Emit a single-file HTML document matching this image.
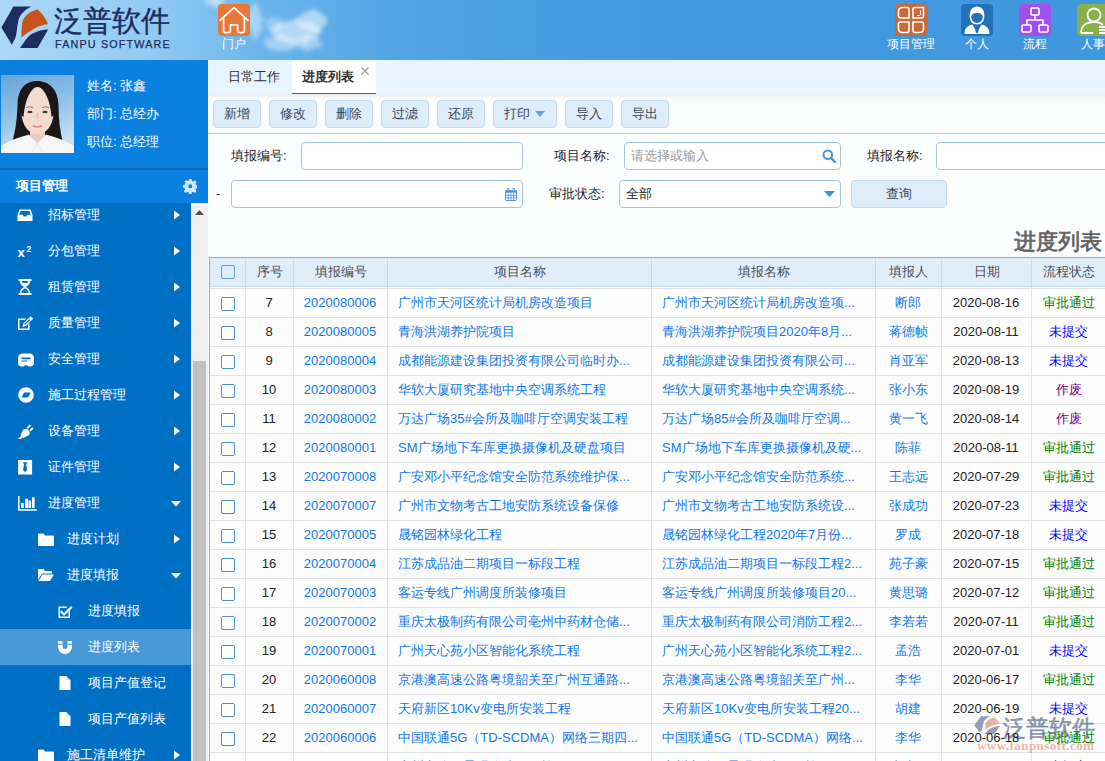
<!DOCTYPE html>
<html><head><meta charset="utf-8">
<style>
*{margin:0;padding:0;box-sizing:border-box}
html,body{width:1105px;height:761px;overflow:hidden;font-family:"Liberation Sans",sans-serif;font-size:13px;color:#333;background:#fff}
svg{position:absolute;display:block}
#hdr{position:absolute;left:0;top:0;width:1105px;height:60px;background:linear-gradient(90deg,#acd7f8 0px,#92caf3 150px,#6cb5ec 260px,#57a9e6 360px,#4aa0e2 480px,#4299df 700px,#3f97de 1105px);overflow:hidden}
.cloud{position:absolute;border-radius:50%;background:rgba(255,255,255,.55);filter:blur(4px)}
.hic{position:absolute;top:4px;width:32px;height:32px;border-radius:4px}
.hl1{position:absolute;top:37px;color:#fff;font-size:12px;line-height:14px;white-space:nowrap;text-align:center}
#side{position:absolute;left:0;top:60px;width:208px;height:701px;background:#0070c4;overflow:hidden}
#user{position:absolute;left:0;top:0;width:208px;height:108px;background:#0a80e0}
.ut{position:absolute;left:87px;color:#fff;font-size:13px;line-height:14px;white-space:nowrap}
#sep{position:absolute;left:0;top:108px;width:208px;height:2px;background:#0266b8}
#pm{position:absolute;left:0;top:110px;width:208px;height:33px;background:#0a80e0;color:#fff;font-weight:bold}
#menu{position:absolute;left:0;top:143px;width:191px;height:558px;overflow:hidden}
.mi{position:absolute;left:0;width:191px;height:36px}
.mi.hl{background:#4998d6}
.mt{position:absolute;top:10px;color:#fff;font-size:13px;line-height:16px;white-space:nowrap}
#sb{position:absolute;left:191px;top:143px;width:17px;height:558px;background:#f0f0f0}
#main{position:absolute;left:208px;top:60px;width:897px;height:701px;background:#fcfdfe;overflow:hidden}
#tabs{position:absolute;left:0;top:0;width:897px;height:34px;background:#e8f5fe}
.tab{position:absolute;top:0;height:34px;line-height:34px;font-size:13px;color:#333;white-space:nowrap}
#tb{position:absolute;left:0;top:34px;width:897px;height:40px;background:linear-gradient(#ebeced,#f7f8f9 4px,#fbfdfd 9px,#fbfdfd);border-bottom:1px solid #a9cbe4}
.btn{position:absolute;top:6px;height:28px;width:48px;background:#deedfa;border:1px solid #c3d9ec;border-radius:4px;text-align:center;line-height:26px;color:#3a4656;font-size:13px;white-space:nowrap}
.lbl{position:absolute;font-size:13px;color:#1e1e1e;line-height:16px;white-space:nowrap}
.inp{position:absolute;height:28px;background:#fff;border:1px solid #a6c6e0;border-radius:4px}
#title{position:absolute;left:806px;top:169px;font-size:22px;font-weight:bold;color:#666;line-height:26px;white-space:nowrap}
#thead{position:absolute;left:1px;top:197px;width:920px;height:30px;background:#e0eefa;border-top:1px solid #7fb5e3;border-bottom:1px solid #c2dcf0}
.th{position:absolute;top:0;height:28px;line-height:28px;text-align:center;color:#4a4e5a;font-size:13px;border-left:1px solid #c5dcf0}
#tbody{position:absolute;left:1px;top:227px;width:920px;height:480px;overflow:hidden;background:#fff}
#tleft{position:absolute;left:1px;top:197px;width:1px;height:520px;background:#7fb5e3}
.tr{position:absolute;left:0;width:920px;height:29px;border-top:1px solid #e3e3e6}
.tr span{position:absolute;z-index:3;top:0;height:28px;line-height:28px;white-space:nowrap;font-size:13px;color:#222}
.tr span.c{text-align:center}
.tr span.bl{color:#0f79ec}
.cb{position:absolute;width:14px;height:14px;border:1px solid #4a8fd2;border-radius:2px;background:#fff}
.vl{position:absolute;top:0;width:1px;height:480px;background:#e3e3e6}
</style></head><body>
<div id="hdr">
  <!-- clouds -->
  <svg style="left:195px;top:0" width="150" height="60" viewBox="0 0 150 60">
    <defs>
      <filter id="cf" x="-20%" y="-20%" width="140%" height="140%">
        <feTurbulence type="fractalNoise" baseFrequency="0.12" numOctaves="2" seed="3" result="n"/>
        <feDisplacementMap in="SourceGraphic" in2="n" scale="9" result="d"/>
        <feGaussianBlur in="d" stdDeviation="2.2"/>
      </filter>
    </defs>
    <g filter="url(#cf)" fill="#fff">
      <ellipse cx="20" cy="1" rx="10" ry="5" opacity=".5"/>
      <ellipse cx="60" cy="21" rx="7" ry="18" opacity=".4"/>
      <ellipse cx="117" cy="21" rx="15" ry="10" opacity=".5"/>
      <ellipse cx="101" cy="32" rx="26" ry="11" opacity=".5"/>
      <ellipse cx="86" cy="44" rx="15" ry="8" opacity=".4"/>
      <ellipse cx="113" cy="43" rx="13" ry="7" opacity=".4"/>
      <ellipse cx="80" cy="24" rx="9" ry="7" opacity=".3"/>
    </g>
  </svg>
  <!-- logo -->
  <svg style="left:0;top:0" width="52" height="52" viewBox="0 0 52 52">
    <path d="M13.4 6.5H31.5C26 9 20 14 18.4 20.2 17 26 17 32 15.5 37.6L11.9 44.8 1.4 27.5z" fill="#1c2d5e"/>
    <path d="M37.6 9.4C42 13 46 18 48.1 24.2 40 24.5 30 30 21.3 37.6 21.5 30 22 24 22.4 21.7 24 16 30 11 37.6 9.4z" fill="#c9521c"/>
    <path d="M48.1 29.6L37.6 48.1H19.9C24 42 27 38 28.9 36.2 34 32 42 29.6 48.1 29.6z" fill="#1c2d5e"/>
  </svg>
  <div style="position:absolute;left:54px;top:3px;font-size:28.5px;line-height:36px;color:#1c2d5e;-webkit-text-stroke:0.35px #1c2d5e;white-space:nowrap">泛普软件</div>
  <div style="position:absolute;left:55px;top:38px;font-size:10.8px;line-height:12px;color:#1c2d5e;letter-spacing:1.15px;-webkit-text-stroke:.25px #1c2d5e;white-space:nowrap">FANPU SOFTWARE</div>
  <!-- home -->
  <div class="hic" style="left:218px;background:#e8773a"></div>
  <svg style="left:218px;top:4px" width="32" height="32" viewBox="0 0 32 32"><path d="M2 16.3L16 3.6l14 12.7" fill="none" stroke="#fff" stroke-width="1.7" stroke-linecap="round" stroke-linejoin="round"/><path d="M5.6 13.5v13.5c0 1 .6 1.6 1.6 1.6h3.6c1 0 1.6-.6 1.6-1.6v-6.2h7.2v6.2c0 1 .6 1.6 1.6 1.6h3.6c1 0 1.6-.6 1.6-1.6V13.5" fill="none" stroke="#fff" stroke-width="1.7" stroke-linejoin="round"/></svg>
  <div class="hl1" style="left:222px;width:24px">门户</div>
  <!-- right icons -->
  <div class="hic" style="left:895px;background:#c8693a"></div>
  <svg style="left:895px;top:4px" width="32" height="32" viewBox="0 0 32 32" fill="none" stroke="#fff" stroke-width="1.6">
    <path d="M7.5 3.5h4.5c1.2 0 2 .8 2 2V14H6c-1.5 0-2.5-1-2.5-2.5V7.5c0-2.5 1.5-4 4-4z"/>
    <path d="M18 5.5c0-1.2.8-2 2-2h8.5V12c0 1.2-.8 2-2 2H18z"/>
    <path d="M3.5 20c0-1.2.8-2 2-2H14v8.5c0 1.2-.8 2-2 2H7.5c-2.5 0-4-1.5-4-4z"/>
    <path d="M18 18h8.5c1.2 0 2 .8 2 2v4.5c0 2.5-1.5 4-4 4H20c-1.2 0-2-.8-2-2z"/>
    <path d="M25.5 6.5v3.5c0 1-.5 1.5-1.5 1.5h-2" stroke-width="1"/>
  </svg>
  <div class="hl1" style="left:887px;width:48px">项目管理</div>
  <div class="hic" style="left:961px;background:#2170b8"></div>
  <svg style="left:961px;top:4px" width="32" height="32" viewBox="0 0 32 32">
    <path d="M8.6 12C8.6 6 11.5 2.5 16 2.5s7.4 3.5 7.4 9.5c0 5-3 8.5-7.4 8.5S8.6 17 8.6 12z" fill="#fff"/>
    <path d="M10.2 12.3c.6-2.3 2.6-3.4 5.8-3.4s5.2 1.1 5.8 3.4c0 4-2.3 6.6-5.8 6.6s-5.8-2.6-5.8-6.6z" fill="#2170b8"/>
    <path d="M3.5 30c0-5 2.5-8.5 8-9.5L16 29l4.5-8.5c5.5 1 8 4.5 8 9.5z" fill="#fff"/>
    <path d="M15.2 21.5h1.6l.7 6.5-1.5 1.5-1.5-1.5z" fill="#2170b8"/>
  </svg>
  <div class="hl1" style="left:965px;width:24px">个人</div>
  <div class="hic" style="left:1019px;background:#a050f0"></div>
  <svg style="left:1019px;top:4px" width="32" height="32" viewBox="0 0 32 32" fill="none" stroke="#fff" stroke-width="1.6">
    <rect x="12" y="4" width="8" height="7" rx="1"/><path d="M16 11v5M8 21v-5h16v5"/>
    <rect x="3" y="21" width="9" height="7" rx="1"/><rect x="20" y="21" width="9" height="7" rx="1"/>
  </svg>
  <div class="hl1" style="left:1023px;width:24px">流程</div>
  <div class="hic" style="left:1077px;background:#88b04b;width:40px"></div>
  <svg style="left:1077px;top:4px" width="32" height="32" viewBox="0 0 32 32" fill="none" stroke="#fff" stroke-width="1.8">
    <circle cx="17" cy="11" r="6.5"/><path d="M4 29c0-7 5-11 13-11 4 0 7 1 9 3M4 29h12"/><path d="M22 23h10M22 26h10M22 29h10"/>
  </svg>
  <div class="hl1" style="left:1081px;width:30px;text-align:left">人事</div>
</div>

<div id="side">
  <div id="user">
    <svg style="left:1px;top:15px;filter:blur(.35px)" width="73" height="78" viewBox="0 0 73 78">
      <defs><linearGradient id="pbg" x1="0" y1="0" x2=".3" y2="1"><stop offset="0" stop-color="#68a3d6"/><stop offset=".55" stop-color="#92c3ea"/><stop offset="1" stop-color="#c6e0f4"/></linearGradient></defs>
      <rect width="73" height="78" fill="url(#pbg)"/>
      <path d="M36 6C23 6 17 15 16.5 30 16 46 14 58 11 68H62C59 56 57.5 44 57.5 30 57 15 49 6 36 6z" fill="#1b1718"/>
      <path d="M29 50h15v20H29z" fill="#ebcdbd"/>
      <path d="M20.5 37C20.5 25 28 13 36.5 12 45 13 52.5 25 52.5 37 52.5 51 45 59 36.5 59 28 59 20.5 51 20.5 37z" fill="#f3dccf"/>
      <path d="M19.5 40C19 22 26 10 36.5 10.5 30 14 24 23 22.5 42z" fill="#1b1718"/><path d="M53.5 40C54 22 47 10 36.5 10.5 43 14 49 23 50.5 42z" fill="#1b1718"/>
      <path d="M25 32.5q4-1.5 7 0M41 32.5q4-1.5 7 0" stroke="#8a6a60" stroke-width=".9" fill="none"/>
      <ellipse cx="29" cy="37" rx="2.6" ry="1.3" fill="#4a3a36"/><ellipse cx="44" cy="37" rx="2.6" ry="1.3" fill="#4a3a36"/>
      <path d="M36.5 38v6" stroke="#e6c4b4" stroke-width="2"/>
      <path d="M32.5 51q4 1.8 8 0" stroke="#e08a94" stroke-width="1.8" fill="none" stroke-linecap="round"/>
      <path d="M0 78V71C8 66 18 62 28 59.5 32 64 35 67 36.5 68 38 67 41 64 45 59.5 55 62 65 66 73 71V78z" fill="#f5f6f8"/>
      <path d="M36.5 68l-6 10M36.5 68l6 10" stroke="#dde1e6" stroke-width=".8"/>
    </svg>
    <div class="ut" style="top:79px;top:19px">姓名: 张鑫</div>
    <div class="ut" style="top:47px">部门: 总经办</div>
    <div class="ut" style="top:75px">职位: 总经理</div>
  </div>
  <div id="sep"></div>
  <div id="pm">
    <div style="position:absolute;left:16px;top:8px;font-size:13px;line-height:16px;font-weight:bold">项目管理</div>
    <svg style="left:182.9px;top:9px" width="14.5" height="14.5" viewBox="0 0 16 16"><path d="M6.6 0h2.8l.4 2.2 1.4.6 1.8-1.3 2 2-1.3 1.8.6 1.4 2.2.4v2.8l-2.2.4-.6 1.4 1.3 1.8-2 2-1.8-1.3-1.4.6-.4 2.2H6.6l-.4-2.2-1.4-.6-1.8 1.3-2-2 1.3-1.8-.6-1.4L0 9.4V6.6l2.2-.4.6-1.4L1.5 3l2-2 1.8 1.3 1.4-.6zM8 5.7A2.3 2.3 0 1 0 8 10.3 2.3 2.3 0 1 0 8 5.7z" fill="#d4e6f7" fill-rule="evenodd"/></svg>
  </div>
  <div id="menu">
<div class="mi" style="top:-6px"><svg class="ic" width="18" height="16" viewBox="0 0 18 16" style="left:17px;top:10px"><path d="M2.5 2.5h11l2 5.5V14H.5V8zM3.6 4L2.1 7.8h3.6l.9 1.8h2.8l.9-1.8h3.6L12.4 4z" fill="#fff" fill-rule="evenodd"/></svg><span class="mt" style="left:48px">招标管理</span><svg class="ar" width="8" height="12" viewBox="0 0 8 12" style="left:173px;top:12px"><path d="M1 1.5l6 4.5-6 4.5z" fill="#fff"/></svg></div>
<div class="mi" style="top:30px"><svg class="ic" width="18" height="16" viewBox="0 0 18 16" style="left:17px;top:10px"><text x="0.5" y="14" font-family="Liberation Sans" font-weight="bold" font-size="13" fill="#fff">x</text><text x="9.5" y="9" font-family="Liberation Sans" font-weight="bold" font-size="8.5" fill="#fff">2</text></svg><span class="mt" style="left:48px">分包管理</span><svg class="ar" width="8" height="12" viewBox="0 0 8 12" style="left:173px;top:12px"><path d="M1 1.5l6 4.5-6 4.5z" fill="#fff"/></svg></div>
<div class="mi" style="top:66px"><svg class="ic" width="18" height="16" viewBox="0 0 18 16" style="left:17px;top:10px"><path d="M1.5 0h13v2h-1.3c0 3.2-2.7 4.8-4.2 6 1.5 1.2 4.2 2.8 4.2 6h1.3v2h-13v-2h1.3c0-3.2 2.7-4.8 4.2-6C5.5 6.8 2.8 5.2 2.8 2H1.5zM4.4 14h7.2c0-2.4-2.2-3.8-3.6-4.8-1.4 1-3.6 2.4-3.6 4.8zM4.6 2c.3 1 .8 1.5 1.4 2h4c.6-.5 1.1-1 1.4-2z" fill="#fff" fill-rule="evenodd"/></svg><span class="mt" style="left:48px">租赁管理</span><svg class="ar" width="8" height="12" viewBox="0 0 8 12" style="left:173px;top:12px"><path d="M1 1.5l6 4.5-6 4.5z" fill="#fff"/></svg></div>
<div class="mi" style="top:102px"><svg class="ic" width="18" height="16" viewBox="0 0 18 16" style="left:17px;top:10px"><path d="M1 3.5h8.5L8 5H2.5v8.5H11V9.8l1.5-1.5V15H1z" fill="#fff"/><path d="M13.6 1.2l2.6 2.6-7.3 7.3-3.4.9.9-3.4zM12.3 4l-5.2 5.2.9.9 5.2-5.2z" fill="#fff" fill-rule="evenodd"/></svg><span class="mt" style="left:48px">质量管理</span><svg class="ar" width="8" height="12" viewBox="0 0 8 12" style="left:173px;top:12px"><path d="M1 1.5l6 4.5-6 4.5z" fill="#fff"/></svg></div>
<div class="mi" style="top:138px"><svg class="ic" width="18" height="16" viewBox="0 0 18 16" style="left:17px;top:10px"><path d="M5.5 2.5h7c2.5 0 4.5 2 4.5 4.5v.8c0 .6-.3 1-.7 1.2.4.3.7.8.7 1.4v1.6c0 2.2-1.8 3.5-3.8 3.5h-1.7l-1.3-1.3H7.8l-1.3 1.3H4.8C2.8 15.5 1 14.2 1 12v-1.6c0-.6.3-1.1.7-1.4-.4-.2-.7-.6-.7-1.2V7c0-2.5 2-4.5 4.5-4.5zM4.5 6.6h9v1.6h-9zM4.5 9.4h5.5v1.2H4.5z" fill="#fff" fill-rule="evenodd"/></svg><span class="mt" style="left:48px">安全管理</span><svg class="ar" width="8" height="12" viewBox="0 0 8 12" style="left:173px;top:12px"><path d="M1 1.5l6 4.5-6 4.5z" fill="#fff"/></svg></div>
<div class="mi" style="top:174px"><svg class="ic" width="18" height="16" viewBox="0 0 18 16" style="left:17px;top:10px"><path d="M9 .2A7.8 7.8 0 1 1 9 15.8 7.8 7.8 0 1 1 9 .2zM4.6 10.6L7 5.4h6.6L11 10.6z" fill="#fff" fill-rule="evenodd"/></svg><span class="mt" style="left:48px">施工过程管理</span><svg class="ar" width="8" height="12" viewBox="0 0 8 12" style="left:173px;top:12px"><path d="M1 1.5l6 4.5-6 4.5z" fill="#fff"/></svg></div>
<div class="mi" style="top:210px"><svg class="ic" width="18" height="16" viewBox="0 0 18 16" style="left:17px;top:10px"><path d="M1.2 15.8l3-3-.7-.7 2.6-5.3c1-1.4 3.2-1.6 4.6-.2l1.1 1.1c1.4 1.4 1.2 3.6-.2 4.6L6.3 15l-.7-.7-3 3z" fill="#fff"/><path d="M9.6 4.6l3-3 1.4 1.4-3 3zM12.2 7.2l3-3 1.4 1.4-3 3z" fill="#fff"/></svg><span class="mt" style="left:48px">设备管理</span><svg class="ar" width="8" height="12" viewBox="0 0 8 12" style="left:173px;top:12px"><path d="M1 1.5l6 4.5-6 4.5z" fill="#fff"/></svg></div>
<div class="mi" style="top:246px"><svg class="ic" width="18" height="16" viewBox="0 0 18 16" style="left:17px;top:10px"><path d="M1.1 1h14v14.5h-14zM5.8 3.2h4.6l-1.3 2.2 1.1 5.6-2.1 2-2.1-2 1.1-5.6z" fill="#fff" fill-rule="evenodd"/></svg><span class="mt" style="left:48px">证件管理</span><svg class="ar" width="8" height="12" viewBox="0 0 8 12" style="left:173px;top:12px"><path d="M1 1.5l6 4.5-6 4.5z" fill="#fff"/></svg></div>
<div class="mi" style="top:282px"><svg class="ic" width="20" height="16" viewBox="0 0 20 16" style="left:17px;top:10px"><path d="M1.1 1h1.5v13.2h17.3v1.5H1.1z" fill="#fff"/><rect x="4" y="7.9" width="2.8" height="5.1" fill="#fff"/><rect x="8.2" y="3.7" width="2.8" height="9.3" fill="#fff"/><rect x="11.4" y="5.6" width="2.7" height="7.4" fill="#fff"/><rect x="15" y="2.4" width="2.6" height="10.6" fill="#fff"/></svg><span class="mt" style="left:48px">进度管理</span><svg class="ar" width="12" height="8" viewBox="0 0 12 8" style="left:170px;top:15px"><path d="M1 1h10L6 6.5z" fill="#fff"/></svg></div>
<div class="mi" style="top:318px"><svg class="ic" width="18" height="16" viewBox="0 0 18 16" style="left:38px;top:10px"><path d="M0 3.5C0 2.8.5 2.5 1 2.5h4.5l1.5 2h8c.5 0 1 .3 1 1V14c0 .5-.5 1-1 1H1c-.5 0-1-.5-1-1z" fill="#fff"/></svg><span class="mt" style="left:67px">进度计划</span><svg class="ar" width="8" height="12" viewBox="0 0 8 12" style="left:173px;top:12px"><path d="M1 1.5l6 4.5-6 4.5z" fill="#fff"/></svg></div>
<div class="mi" style="top:354px"><svg class="ic" width="18" height="16" viewBox="0 0 18 16" style="left:38px;top:10px"><path d="M0 3C0 2.5.5 2 1 2h4.5L7 4h6c.5 0 1 .5 1 1v1.5H4L0 13z" fill="#fff"/><path d="M4.5 7.5H16L12 14H.5z" fill="#fff"/></svg><span class="mt" style="left:67px">进度填报</span><svg class="ar" width="12" height="8" viewBox="0 0 12 8" style="left:170px;top:15px"><path d="M1 1h10L6 6.5z" fill="#fff"/></svg></div>
<div class="mi" style="top:390px"><svg class="ic" width="18" height="16" viewBox="0 0 18 16" style="left:57px;top:10px"><path d="M1.5 3.5h9l-1.5 1.5H3v8.5h8.5V9l1.5-1.5V15H1.5z" fill="#fff"/><path d="M4.5 7.5l2.5 2.5 7-7 1.5 1.5-8.5 8.5-4-4z" fill="#fff"/></svg><span class="mt" style="left:88px">进度填报</span></div>
<div class="mi hl" style="top:426px"><svg class="ic" width="18" height="16" viewBox="0 0 18 16" style="left:57px;top:10px"><path d="M1 2h4.5v5c0 2 1 3 2.5 3s2.5-1 2.5-3V2H15v5.5c0 4-3 7.5-7 7.5S1 11.5 1 7.5z" fill="#fff"/><rect x="5.5" y="4.5" width="5" height="0" fill="#0070c4"/><path d="M1 4.8h4.5v1H1zM10.5 4.8H15v1h-4.5z" fill="#4f9bd9"/></svg><span class="mt" style="left:88px">进度列表</span></div>
<div class="mi" style="top:462px"><svg class="ic" width="18" height="16" viewBox="0 0 18 16" style="left:57px;top:10px"><path d="M2.5 1h7l4 4v10h-11z" fill="#fff"/><path d="M9.5 1v4h4" fill="#0070c4" opacity=".3"/></svg><span class="mt" style="left:88px">项目产值登记</span></div>
<div class="mi" style="top:498px"><svg class="ic" width="18" height="16" viewBox="0 0 18 16" style="left:57px;top:10px"><path d="M2.5 1h7l4 4v10h-11z" fill="#fff"/><path d="M9.5 1v4h4" fill="#0070c4" opacity=".3"/></svg><span class="mt" style="left:88px">项目产值列表</span></div>
<div class="mi" style="top:534px"><svg class="ic" width="18" height="16" viewBox="0 0 18 16" style="left:38px;top:10px"><path d="M0 3.5C0 2.8.5 2.5 1 2.5h4.5l1.5 2h8c.5 0 1 .3 1 1V14c0 .5-.5 1-1 1H1c-.5 0-1-.5-1-1z" fill="#fff"/></svg><span class="mt" style="left:67px">施工清单维护</span><svg class="ar" width="8" height="12" viewBox="0 0 8 12" style="left:173px;top:12px"><path d="M1 1.5l6 4.5-6 4.5z" fill="#fff"/></svg></div>
  </div>
  <div id="sb">
    <svg style="left:4px;top:7px" width="9" height="5" viewBox="0 0 9 5"><path d="M0 5L4.5 0 9 5z" fill="#505050"/></svg>
    <div style="position:absolute;left:2px;top:158px;width:13px;height:420px;background:#c1c1c1"></div>
  </div>
</div>

<div id="main">
  <div id="tabs">
    <div class="tab" style="left:20px">日常工作</div>
    <div class="tab" style="left:84px;width:84px;background:#fff;border-bottom:1px solid #0a70c8;padding-left:10px;font-weight:bold;color:#333">进度列表</div>
    <svg style="left:153px;top:7px" width="8" height="8" viewBox="0 0 8 8"><path d="M.5.5l7 7M7.5.5l-7 7" stroke="#999" stroke-width="1.1"/></svg>
  </div>
  <div id="tb">
    <div class="btn" style="left:5px">新增</div>
    <div class="btn" style="left:61px">修改</div>
    <div class="btn" style="left:117px">删除</div>
    <div class="btn" style="left:173px">过滤</div>
    <div class="btn" style="left:229px">还原</div>
    <div class="btn" style="left:285px;width:64px;text-align:left;padding-left:10px">打印<svg style="left:41px;top:10px" width="10" height="6" viewBox="0 0 10 6"><path d="M0 0h10L5 6z" fill="#6aa0d8"/></svg></div>
    <div class="btn" style="left:357px">导入</div>
    <div class="btn" style="left:413px">导出</div>
  </div>
  <!-- form -->
  <div class="lbl" style="left:23px;top:88px">填报编号:</div>
  <div class="inp" style="left:93px;top:82px;width:222px"></div>
  <div class="lbl" style="left:346px;top:88px">项目名称:</div>
  <div class="inp" style="left:416px;top:82px;width:217px"></div>
  <div class="lbl" style="left:423px;top:88px;color:#999">请选择或输入</div>
  <svg style="left:614px;top:89px" width="14" height="14" viewBox="0 0 14 14"><circle cx="5.8" cy="5.8" r="4.3" fill="none" stroke="#4397de" stroke-width="2"/><path d="M9 9l3.8 3.8" stroke="#4397de" stroke-width="2.4" stroke-linecap="round"/></svg>
  <div class="lbl" style="left:659px;top:88px">填报名称:</div>
  <div class="inp" style="left:728px;top:82px;width:200px"></div>
  <div class="lbl" style="left:8px;top:126px">-</div>
  <div class="inp" style="left:23px;top:120px;width:292px"></div>
  <svg style="left:297px;top:128px" width="12" height="13" viewBox="0 0 12 13"><rect x=".5" y="2.5" width="11" height="10" rx=".8" fill="#fff" stroke="#4f93d8"/><rect x=".5" y="2.5" width="11" height="2.2" fill="#4f93d8"/><path d="M3.3 4.7v7.8M6 4.7v7.8M8.7 4.7v7.8M1 7.3h10M1 9.9h10" stroke="#5a9ad9" stroke-width=".9"/><path d="M2.3 0h2v3h-2zM7.7 0h2v3h-2z" fill="#4f93d8"/><path d="M2.9 .8h.8v2h-.8zM8.3.8h.8v2h-.8z" fill="#cfe3f7"/></svg>
  <div class="lbl" style="left:341px;top:126px">审批状态:</div>
  <div class="inp" style="left:411px;top:120px;width:222px"></div>
  <div class="lbl" style="left:418px;top:126px;color:#222">全部</div>
  <svg style="left:616px;top:131px" width="11" height="6" viewBox="0 0 11 6"><path d="M0 0h11L5.5 6z" fill="#3b8ed8"/></svg>
  <div class="btn" style="left:643px;top:120px;width:96px;height:28px;line-height:26px">查询</div>
  <div id="title">进度列表</div>
  <!-- table -->
  <div id="thead">
    <div class="cb" style="left:12px;top:7px;border-color:#5fa0d8;background:#e0eefa"></div>
    <div class="th" style="left:36px;width:48px">序号</div>
    <div class="th" style="left:84px;width:94px">填报编号</div>
    <div class="th" style="left:178px;width:264px">项目名称</div>
    <div class="th" style="left:442px;width:224px">填报名称</div>
    <div class="th" style="left:666px;width:66px">填报人</div>
    <div class="th" style="left:732px;width:90px">日期</div>
    <div class="th" style="left:822px;width:75px">流程状态</div>
  </div>
  <div id="tbody">
<div class="tr" style="top:1px;background:#fdfdfe"><i class="cb" style="left:12px;top:8px"></i><span class="c" style="left:36px;width:48px">7</span><span class="c bl" style="left:84px;width:94px">2020080006</span><span class="l bl" style="left:189px">广州市天河区统计局机房改造项目</span><span class="l bl" style="left:453px">广州市天河区统计局机房改造项...</span><span class="c bl" style="left:666px;width:66px">断郎</span><span class="c" style="left:732px;width:90px">2020-08-16</span><span class="c" style="left:822px;width:75px;color:#008000">审批通过</span></div>
<div class="tr" style="top:30px;background:#fbfbfc"><i class="cb" style="left:12px;top:8px"></i><span class="c" style="left:36px;width:48px">8</span><span class="c bl" style="left:84px;width:94px">2020080005</span><span class="l bl" style="left:189px">青海洪湖养护院项目</span><span class="l bl" style="left:453px">青海洪湖养护院项目2020年8月...</span><span class="c bl" style="left:666px;width:66px">蒋德帧</span><span class="c" style="left:732px;width:90px">2020-08-11</span><span class="c" style="left:822px;width:75px;color:#0000ff">未提交</span></div>
<div class="tr" style="top:59px;background:#fdfdfe"><i class="cb" style="left:12px;top:8px"></i><span class="c" style="left:36px;width:48px">9</span><span class="c bl" style="left:84px;width:94px">2020080004</span><span class="l bl" style="left:189px">成都能源建设集团投资有限公司临时办...</span><span class="l bl" style="left:453px">成都能源建设集团投资有限公司...</span><span class="c bl" style="left:666px;width:66px">肖亚军</span><span class="c" style="left:732px;width:90px">2020-08-13</span><span class="c" style="left:822px;width:75px;color:#0000ff">未提交</span></div>
<div class="tr" style="top:88px;background:#fbfbfc"><i class="cb" style="left:12px;top:8px"></i><span class="c" style="left:36px;width:48px">10</span><span class="c bl" style="left:84px;width:94px">2020080003</span><span class="l bl" style="left:189px">华软大厦研究基地中央空调系统工程</span><span class="l bl" style="left:453px">华软大厦研究基地中央空调系统...</span><span class="c bl" style="left:666px;width:66px">张小东</span><span class="c" style="left:732px;width:90px">2020-08-19</span><span class="c" style="left:822px;width:75px;color:#800080">作废</span></div>
<div class="tr" style="top:117px;background:#fdfdfe"><i class="cb" style="left:12px;top:8px"></i><span class="c" style="left:36px;width:48px">11</span><span class="c bl" style="left:84px;width:94px">2020080002</span><span class="l bl" style="left:189px">万达广场35#会所及咖啡厅空调安装工程</span><span class="l bl" style="left:453px">万达广场85#会所及咖啡厅空调...</span><span class="c bl" style="left:666px;width:66px">黄一飞</span><span class="c" style="left:732px;width:90px">2020-08-14</span><span class="c" style="left:822px;width:75px;color:#800080">作废</span></div>
<div class="tr" style="top:146px;background:#fbfbfc"><i class="cb" style="left:12px;top:8px"></i><span class="c" style="left:36px;width:48px">12</span><span class="c bl" style="left:84px;width:94px">2020080001</span><span class="l bl" style="left:189px">SM广场地下车库更换摄像机及硬盘项目</span><span class="l bl" style="left:453px">SM广场地下车库更换摄像机及硬...</span><span class="c bl" style="left:666px;width:66px">陈菲</span><span class="c" style="left:732px;width:90px">2020-08-11</span><span class="c" style="left:822px;width:75px;color:#008000">审批通过</span></div>
<div class="tr" style="top:175px;background:#fdfdfe"><i class="cb" style="left:12px;top:8px"></i><span class="c" style="left:36px;width:48px">13</span><span class="c bl" style="left:84px;width:94px">2020070008</span><span class="l bl" style="left:189px">广安邓小平纪念馆安全防范系统维护保...</span><span class="l bl" style="left:453px">广安邓小平纪念馆安全防范系统...</span><span class="c bl" style="left:666px;width:66px">王志远</span><span class="c" style="left:732px;width:90px">2020-07-29</span><span class="c" style="left:822px;width:75px;color:#008000">审批通过</span></div>
<div class="tr" style="top:204px;background:#fbfbfc"><i class="cb" style="left:12px;top:8px"></i><span class="c" style="left:36px;width:48px">14</span><span class="c bl" style="left:84px;width:94px">2020070007</span><span class="l bl" style="left:189px">广州市文物考古工地安防系统设备保修</span><span class="l bl" style="left:453px">广州市文物考古工地安防系统设...</span><span class="c bl" style="left:666px;width:66px">张成功</span><span class="c" style="left:732px;width:90px">2020-07-23</span><span class="c" style="left:822px;width:75px;color:#0000ff">未提交</span></div>
<div class="tr" style="top:233px;background:#fdfdfe"><i class="cb" style="left:12px;top:8px"></i><span class="c" style="left:36px;width:48px">15</span><span class="c bl" style="left:84px;width:94px">2020070005</span><span class="l bl" style="left:189px">晟铭园林绿化工程</span><span class="l bl" style="left:453px">晟铭园林绿化工程2020年7月份...</span><span class="c bl" style="left:666px;width:66px">罗成</span><span class="c" style="left:732px;width:90px">2020-07-18</span><span class="c" style="left:822px;width:75px;color:#0000ff">未提交</span></div>
<div class="tr" style="top:262px;background:#fbfbfc"><i class="cb" style="left:12px;top:8px"></i><span class="c" style="left:36px;width:48px">16</span><span class="c bl" style="left:84px;width:94px">2020070004</span><span class="l bl" style="left:189px">江苏成品油二期项目一标段工程</span><span class="l bl" style="left:453px">江苏成品油二期项目一标段工程2...</span><span class="c bl" style="left:666px;width:66px">苑子豪</span><span class="c" style="left:732px;width:90px">2020-07-15</span><span class="c" style="left:822px;width:75px;color:#008000">审批通过</span></div>
<div class="tr" style="top:291px;background:#fdfdfe"><i class="cb" style="left:12px;top:8px"></i><span class="c" style="left:36px;width:48px">17</span><span class="c bl" style="left:84px;width:94px">2020070003</span><span class="l bl" style="left:189px">客运专线广州调度所装修项目</span><span class="l bl" style="left:453px">客运专线广州调度所装修项目20...</span><span class="c bl" style="left:666px;width:66px">黄思璐</span><span class="c" style="left:732px;width:90px">2020-07-12</span><span class="c" style="left:822px;width:75px;color:#008000">审批通过</span></div>
<div class="tr" style="top:320px;background:#fbfbfc"><i class="cb" style="left:12px;top:8px"></i><span class="c" style="left:36px;width:48px">18</span><span class="c bl" style="left:84px;width:94px">2020070002</span><span class="l bl" style="left:189px">重庆太极制药有限公司亳州中药材仓储...</span><span class="l bl" style="left:453px">重庆太极制药有限公司消防工程2...</span><span class="c bl" style="left:666px;width:66px">李若若</span><span class="c" style="left:732px;width:90px">2020-07-11</span><span class="c" style="left:822px;width:75px;color:#008000">审批通过</span></div>
<div class="tr" style="top:349px;background:#fdfdfe"><i class="cb" style="left:12px;top:8px"></i><span class="c" style="left:36px;width:48px">19</span><span class="c bl" style="left:84px;width:94px">2020070001</span><span class="l bl" style="left:189px">广州天心苑小区智能化系统工程</span><span class="l bl" style="left:453px">广州天心苑小区智能化系统工程2...</span><span class="c bl" style="left:666px;width:66px">孟浩</span><span class="c" style="left:732px;width:90px">2020-07-01</span><span class="c" style="left:822px;width:75px;color:#0000ff">未提交</span></div>
<div class="tr" style="top:378px;background:#fbfbfc"><i class="cb" style="left:12px;top:8px"></i><span class="c" style="left:36px;width:48px">20</span><span class="c bl" style="left:84px;width:94px">2020060008</span><span class="l bl" style="left:189px">京港澳高速公路粤境韶关至广州互通路...</span><span class="l bl" style="left:453px">京港澳高速公路粤境韶关至广州...</span><span class="c bl" style="left:666px;width:66px">李华</span><span class="c" style="left:732px;width:90px">2020-06-17</span><span class="c" style="left:822px;width:75px;color:#008000">审批通过</span></div>
<div class="tr" style="top:407px;background:#fdfdfe"><i class="cb" style="left:12px;top:8px"></i><span class="c" style="left:36px;width:48px">21</span><span class="c bl" style="left:84px;width:94px">2020060007</span><span class="l bl" style="left:189px">天府新区10Kv变电所安装工程</span><span class="l bl" style="left:453px">天府新区10Kv变电所安装工程20...</span><span class="c bl" style="left:666px;width:66px">胡建</span><span class="c" style="left:732px;width:90px">2020-06-19</span><span class="c" style="left:822px;width:75px;color:#0000ff">未提交</span></div>
<div class="tr" style="top:436px;background:#fbfbfc"><i class="cb" style="left:12px;top:8px"></i><span class="c" style="left:36px;width:48px">22</span><span class="c bl" style="left:84px;width:94px">2020060006</span><span class="l bl" style="left:189px">中国联通5G（TD-SCDMA）网络三期四...</span><span class="l bl" style="left:453px">中国联通5G（TD-SCDMA）网络...</span><span class="c bl" style="left:666px;width:66px">李华</span><span class="c" style="left:732px;width:90px">2020-06-18</span><span class="c" style="left:822px;width:75px;color:#008000">审批通过</span></div>
<div class="tr" style="top:465px;background:#fdfdfe"><i class="cb" style="left:12px;top:8px"></i><span class="c" style="left:36px;width:48px">23</span><span class="c bl" style="left:84px;width:94px">2020060005</span><span class="l bl" style="left:189px">广州市公园景观改造工程施工项目</span><span class="l bl" style="left:453px">广州市公园景观改造工程施工...</span><span class="c bl" style="left:666px;width:66px">张建国</span><span class="c" style="left:732px;width:90px">2020-06-15</span><span class="c" style="left:822px;width:75px;color:#0000ff">未提交</span></div>
    <div class="vl" style="left:36px"></div>
    <div class="vl" style="left:84px"></div>
    <div class="vl" style="left:178px"></div>
    <div class="vl" style="left:442px"></div>
    <div class="vl" style="left:666px"></div>
    <div class="vl" style="left:732px"></div>
    <div class="vl" style="left:822px"></div>
  </div>
  <div id="tleft"></div>
  <!-- watermark -->
  <svg style="left:766px;top:656px;z-index:2" width="26" height="18" viewBox="1 6 47 42" preserveAspectRatio="none" opacity=".6">
    <path d="M13.4 6.5H31.5C26 9 20 14 18.4 20.2 17 26 17 32 15.5 37.6L11.9 44.8 1.4 27.5z" fill="#50628a"/>
    <path d="M37.6 9.4C42 13 46 18 48.1 24.2 40 24.5 30 30 21.3 37.6 21.5 30 22 24 22.4 21.7 24 16 30 11 37.6 9.4z" fill="#d88a68"/>
    <path d="M48.1 29.6L37.6 48.1H19.9C24 42 27 38 28.9 36.2 34 32 42 29.6 48.1 29.6z" fill="#50628a"/>
  </svg>
  <div style="position:absolute;z-index:2;left:795px;top:655px;font-size:23px;line-height:26px;color:rgba(80,98,135,.6);-webkit-text-stroke:.6px rgba(80,98,135,.6);white-space:nowrap">泛普软件</div>
  <div style="position:absolute;z-index:2;left:769px;top:679px;font-family:'Liberation Serif',serif;font-size:13px;font-weight:bold;line-height:13px;color:rgba(220,140,100,.6);white-space:nowrap;letter-spacing:.45px">www.fanpusoft.com</div>
</div>
</body></html>
